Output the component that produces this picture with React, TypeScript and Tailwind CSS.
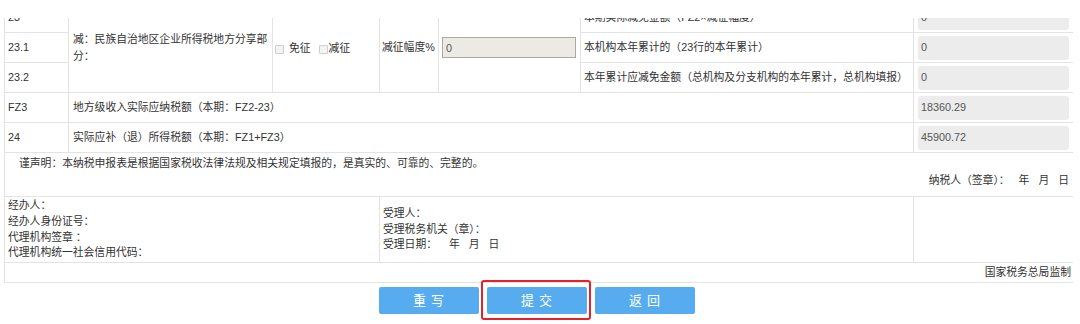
import React from "react";

// ── Shared classes ──────────────────────────────────────────────────────────

const cell = "border border-[#e3e3e3] px-[3px] align-middle";
const valueBox =
  "mx-[1px] h-[24px] rounded-[3px] bg-[#ececec] px-[3px] flex items-center text-[#555]";

const FONT = {
  fontFamily: '"Liberation Sans", "Noto Sans CJK SC", sans-serif',
};

const sp = (n: number) => "\u00a0".repeat(n);

function Check({ label, gap }: { label: string; gap?: boolean }) {
  return (
    <span className="inline-flex items-center">
      <span className="inline-block w-[9px] h-[9px] border border-[#cfcfcf] bg-[#f3f3f3] rounded-[1px]" />
      <span className={gap ? "ml-[5px]" : "ml-[1px]"}>{label}</span>
    </span>
  );
}

function Value({ v }: { v: string }) {
  return <div className={valueBox}>{v}</div>;
}

// ── Rows ────────────────────────────────────────────────────────────────────

const SUB_ROWS = [
  { no: "23", desc: "本期实际减免金额（FZ2×减征幅度）", v: "0" },
  { no: "23.1", desc: "本机构本年累计的（23行的本年累计）", v: "0" },
  {
    no: "23.2",
    desc: "本年累计应减免金额（总机构及分支机构的本年累计，总机构填报）",
    v: "0",
  },
];

const TOTAL_ROWS = [
  { no: "FZ3", desc: "地方级收入实际应纳税额（本期：FZ2-23）", v: "18360.29" },
  { no: "24", desc: "实际应补（退）所得税额（本期：FZ1+FZ3）", v: "45900.72" },
];

const btn =
  "w-[100px] h-[27px] rounded-[2px] bg-[#56acef] text-white text-[13px] tracking-[5px] pl-[5px]";

export default function App() {
  return (
    <div
      className="w-[1080px] h-[324px] bg-white overflow-hidden text-[10.8px] text-[#333] leading-[15.5px]"
      style={FONT}
    >
      {/* table is scrolled: top rows hidden under the page header */}
      <div className="pt-[18px] pl-[4px]">
        <div className="overflow-hidden w-[1069px]">
          <table className="-mt-[16px] w-[1069px] table-fixed border-collapse">
            <colgroup>
              <col className="w-[64px]" />
              <col className="w-[204px]" />
              <col className="w-[107px]" />
              <col className="w-[59px]" />
              <col className="w-[142px]" />
              <col className="w-[333px]" />
              <col className="w-[160px]" />
            </colgroup>
            <tbody>
              {SUB_ROWS.map((r, i) => (
                <tr key={r.no} className="h-[30px]">
                  <td className={cell}>{r.no}</td>
                  {i === 0 && (
                    <>
                      <td className={`${cell} pl-[4px] leading-[16.5px]`} rowSpan={3}>
                        减：民族自治地区企业所得税地方分享部
                        <br />
                        分：
                      </td>
                      <td className={`${cell} pl-[2px]`} rowSpan={3}>
                        <div className="flex items-center gap-[8px] pt-[3px]">
                          <Check label="免征" gap />
                          <Check label="减征" />
                        </div>
                      </td>
                      <td className={`${cell} pl-[2px]`} rowSpan={3}>
                        减征幅度%
                      </td>
                      <td className={cell} rowSpan={3}>
                        <input
                          readOnly
                          value="0"
                          className="block w-[134px] h-[21px] bg-[#ebebe4] border border-[#a9a9a9] px-[3px] text-[#555] outline-none"
                          style={FONT}
                        />
                      </td>
                    </>
                  )}
                  <td className={cell}>{r.desc}</td>
                  <td className={`${cell} px-[2px]`}>
                    <Value v={r.v} />
                  </td>
                </tr>
              ))}

              {TOTAL_ROWS.map((r) => (
                <tr key={r.no} className="h-[30px]">
                  <td className={cell}>{r.no}</td>
                  <td className={`${cell} pl-[4px]`} colSpan={5}>
                    {r.desc}
                  </td>
                  <td className={`${cell} px-[2px]`}>
                    <Value v={r.v} />
                  </td>
                </tr>
              ))}

              {/* declaration */}
              <tr className="h-[44px]">
                <td className={`${cell} align-top`} colSpan={7}>
                  <div className="pl-[11px] pt-[3px]">
                    谨声明：本纳税申报表是根据国家税收法律法规及相关规定填报的，是真实的、可靠的、完整的。
                  </div>
                  <div className="text-right pt-[1px] pr-[1px]">
                    纳税人（签章）：{sp(3)}年{sp(3)}月{sp(3)}日
                  </div>
                </td>
              </tr>

              {/* signatures */}
              <tr className="h-[66px]">
                <td className={`${cell} leading-[15.8px]`} colSpan={3}>
                  <div>经办人：</div>
                  <div>经办人身份证号：</div>
                  <div>代理机构签章 ：</div>
                  <div>代理机构统一社会信用代码：</div>
                </td>
                <td className={cell} colSpan={3}>
                  <div>受理人：</div>
                  <div>受理税务机关（章）：</div>
                  <div>
                    受理日期：{sp(4)}年{sp(3)}月{sp(3)}日
                  </div>
                </td>
                <td className={cell} />
              </tr>

              {/* footer */}
              <tr className="h-[20px]">
                <td className={`${cell} text-right pr-[2px] pt-[1px]`} colSpan={7}>
                  国家税务总局监制
                </td>
              </tr>
            </tbody>
          </table>
        </div>

        {/* actions */}
        <div className="w-[1069px] flex justify-center gap-[8px] pt-[4px] pr-[4px]">
          <button className={btn}>重写</button>
          <span className="relative">
            <button className={btn}>提交</button>
            <span className="absolute -left-[6px] -right-[4px] -top-[7px] -bottom-[6px] border-2 border-[#e8202a] rounded-[3px] pointer-events-none" />
          </span>
          <button className={btn}>返回</button>
        </div>
      </div>
    </div>
  );
}
